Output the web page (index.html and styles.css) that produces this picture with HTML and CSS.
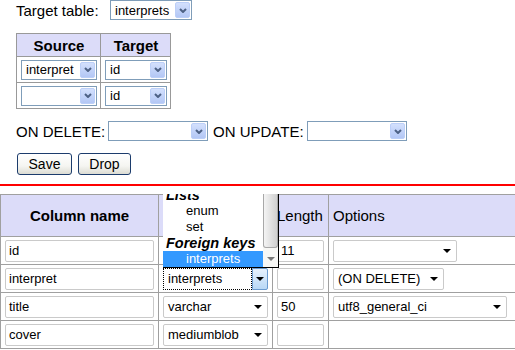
FILE: index.html
```html
<!DOCTYPE html>
<html lang="en">
    <head>
        <title>Foreign key</title>
        <meta charset="utf-8" />
        <link rel="stylesheet" href="styles.css">
    </head>
    <body>
        <div class="fk">
            <div class="fk-row">
                <span class="fk-label target-label">Target table:</span>
                <div class="xp-select w82"><span class="xp-value">interprets</span><span class="xp-btn"><svg width="8" height="5" viewBox="0 0 8 5"><path d="M1 1l3 3 3-3" fill="none" stroke="#4d6185" stroke-width="2"/></svg></span></div>
            </div>

            <table class="fk-table">
                <tr><th>Source</th><th>Target</th></tr>
                <tr>
                    <td><div class="xp-select w76"><span class="xp-value">interpret</span><span class="xp-btn"><svg width="8" height="5" viewBox="0 0 8 5"><path d="M1 1l3 3 3-3" fill="none" stroke="#4d6185" stroke-width="2"/></svg></span></div></td>
                    <td><div class="xp-select w62"><span class="xp-value">id</span><span class="xp-btn"><svg width="8" height="5" viewBox="0 0 8 5"><path d="M1 1l3 3 3-3" fill="none" stroke="#4d6185" stroke-width="2"/></svg></span></div></td>
                </tr>
                <tr>
                    <td><div class="xp-select w76"><span class="xp-value"></span><span class="xp-btn"><svg width="8" height="5" viewBox="0 0 8 5"><path d="M1 1l3 3 3-3" fill="none" stroke="#4d6185" stroke-width="2"/></svg></span></div></td>
                    <td><div class="xp-select w62"><span class="xp-value">id</span><span class="xp-btn"><svg width="8" height="5" viewBox="0 0 8 5"><path d="M1 1l3 3 3-3" fill="none" stroke="#4d6185" stroke-width="2"/></svg></span></div></td>
                </tr>
            </table>

            <div class="fk-row actions">
                <span class="fk-label delete-label">ON DELETE:</span>
                <div class="xp-select w100"><span class="xp-value"></span><span class="xp-btn"><svg width="8" height="5" viewBox="0 0 8 5"><path d="M1 1l3 3 3-3" fill="none" stroke="#4d6185" stroke-width="2"/></svg></span></div>
                <span class="fk-label update-label">ON UPDATE:</span>
                <div class="xp-select w100"><span class="xp-value"></span><span class="xp-btn"><svg width="8" height="5" viewBox="0 0 8 5"><path d="M1 1l3 3 3-3" fill="none" stroke="#4d6185" stroke-width="2"/></svg></span></div>
            </div>

            <div class="buttons">
                <button type="button" class="xp-button save">Save</button>
                <button type="button" class="xp-button drop">Drop</button>
            </div>
        </div>

        <hr class="divider">

        <table class="columns">
            <colgroup>
                <col class="c-name"><col class="c-type"><col class="c-length"><col class="c-options">
            </colgroup>
            <tr class="head">
                <th class="center">Column name</th>
                <th class="center"></th>
                <th>Length</th>
                <th>Options</th>
            </tr>
            <tr>
                <td><div class="txt w149">id</div></td>
                <td><div class="sel w105"><span class="sel-value"></span><i class="tri"></i></div></td>
                <td><div class="txt w47">11</div></td>
                <td><div class="sel w124"><span class="sel-value"></span><i class="tri"></i></div></td>
            </tr>
            <tr>
                <td><div class="txt w149">interpret</div></td>
                <td>
                    <div class="combo">
                        <div class="dropdown">
                            <div class="dropdown-items">
                                <div class="opt-group">Lists</div>
                                <div class="opt">enum</div>
                                <div class="opt">set</div>
                                <div class="opt-group">Foreign keys</div>
                                <div class="opt opt-on">interprets</div>
                            </div>
                            <div class="scrollbar">
                                <div class="thumb"></div>
                                <div class="scroll-down"><i class="tri tri-grey"></i></div>
                            </div>
                        </div>
                        <div class="sel sel-focus w105"><span class="sel-value">interprets</span><span class="sel-btn"><i class="tri"></i></span></div>
                    </div>
                </td>
                <td><div class="txt w47"></div></td>
                <td><div class="sel w111"><span class="sel-value">(ON DELETE)</span><i class="tri"></i></div></td>
            </tr>
            <tr>
                <td><div class="txt w149">title</div></td>
                <td><div class="sel w105"><span class="sel-value">varchar</span><i class="tri"></i></div></td>
                <td><div class="txt w47">50</div></td>
                <td><div class="sel w174"><span class="sel-value">utf8_general_ci</span><i class="tri"></i></div></td>
            </tr>
            <tr>
                <td><div class="txt w149">cover</div></td>
                <td><div class="sel w105"><span class="sel-value">mediumblob</span><i class="tri"></i></div></td>
                <td><div class="txt w47"></div></td>
                <td></td>
            </tr>
        </table>
    </body>
</html>
```

FILE: styles.css
```css
body {
    margin: 0;
    background-color: white;
    color: black;
    font-family: "Liberation Sans", Arial, sans-serif;
    font-size: 15px;
}

/* foreign key form */
.fk { padding-left: 16px; }
.fk-row { display: flex; align-items: center; height: 20px; }
.fk-label { white-space: nowrap; }
.target-label { width: 94px; }
.delete-label { width: 92px; }
.update-label { width: 94px; margin-left: 5px; }
.actions { margin-top: 12px; }

.xp-select {
    display: flex;
    align-items: center;
    box-sizing: border-box;
    height: 20px;
    border: 1px solid #7f9db9;
    background-color: white;
    font-size: 13px;
}
.xp-value { flex: 1; padding-left: 4px; white-space: nowrap; overflow: hidden; }
.xp-btn {
    display: flex;
    align-items: center;
    justify-content: center;
    box-sizing: border-box;
    width: 15px;
    height: 16px;
    margin-right: 1px;
    border: 1px solid #bccff8;
    border-radius: 2px;
    background: linear-gradient(#d3e0fd, #b3c7f5);
}
.w62 { width: 62px; }
.w76 { width: 76px; }
.w82 { width: 82px; }
.w100 { width: 100px; }

.fk-table { border-collapse: collapse; margin-top: 13px; }
.fk-table th, .fk-table td { border: 1px solid #999; padding: 0 3px 0 4px; }
.fk-table th { height: 22px; background-color: #dcdcf9; }
.fk-table td { height: 25px; }

.buttons { display: flex; gap: 6px; margin-top: 12px; padding-left: 1px; }
.xp-button {
    box-sizing: border-box;
    height: 22px;
    padding: 0;
    border: 1px solid #1c3c6c;
    border-radius: 3px;
    background: linear-gradient(#ffffff, #f5f5f1 60%, #dcdcd3);
    font-family: "Liberation Sans", Arial, sans-serif;
    font-size: 14px;
    color: black;
}
.save { width: 55px; }
.drop { width: 53px; }

.divider { border: 0; height: 2px; margin: 9px 0 8px; background-color: #ff0000; }

/* columns table */
.columns { border-collapse: collapse; table-layout: fixed; width: 515px; }
.c-name { width: 158px; }
.c-type { width: 114px; }
.c-length { width: 56px; }
.c-options { width: 187px; }
.columns th, .columns td { border: 1px solid #a0a0a0; padding: 0 4px; text-align: left; }
.columns th { height: 41px; background-color: #dcdcf9; font-weight: normal; }
.columns th.center { text-align: center; font-weight: bold; }
.columns td { height: 27px; }

.txt, .sel {
    display: flex;
    align-items: center;
    box-sizing: border-box;
    height: 22px;
    border: 1px solid #cacaca;
    border-radius: 2px;
    background-color: white;
    font-size: 13px;
    white-space: nowrap;
}
.txt { padding-left: 3px; }
.sel-value { flex: 1; padding-left: 4px; overflow: hidden; }
.w47 { width: 47px; }
.w105 { width: 105px; }
.w111 { width: 111px; }
.w124 { width: 124px; }
.w149 { width: 149px; }
.w174 { width: 174px; }

.tri {
    width: 0;
    height: 0;
    margin-right: 5px;
    border-left: 4px solid transparent;
    border-right: 4px solid transparent;
    border-top: 4px solid black;
}
.tri-grey { margin: 0; border-top-color: #777; }

.sel-focus { border: 0; border-radius: 0; }
.sel-focus .sel-value {
    box-sizing: border-box;
    height: 22px;
    line-height: 20px;
    border: 1px dotted black;
}
.sel-btn {
    display: flex;
    align-items: center;
    justify-content: center;
    box-sizing: border-box;
    width: 16px;
    height: 22px;
    border: 1px solid #6a9bd0;
    border-radius: 0 2px 2px 0;
    background: linear-gradient(#e6f1fd, #b8d8f6);
}
.sel-btn .tri { margin: 0; }

/* open list of the focused select */
.combo { position: relative; }
.dropdown {
    position: absolute;
    left: 0;
    bottom: 100%;
    display: flex;
    width: 115px;
    height: 73px;
    border-right: 1px solid black;
    border-bottom: 1px solid black;
    background-color: white;
    overflow: hidden;
}
.dropdown-items {
    flex: 1;
    display: flex;
    flex-direction: column;
    justify-content: flex-end;
    font-size: 13px;
}
.opt-group, .opt { height: 16px; line-height: 16px; white-space: nowrap; flex-shrink: 0; }
.opt-group { padding-left: 3px; font-weight: bold; font-style: italic; font-size: 14.5px; }
.opt { padding-left: 23px; }
.opt-on { background-color: #3399ff; color: white; }

.scrollbar { display: flex; flex-direction: column; width: 15px; background-color: #f7f7f5; }
.thumb {
    height: 54px;
    box-sizing: border-box;
    border: 1px solid #a8a8a8;
    border-top: 0;
    border-radius: 0 0 3px 3px;
    background: linear-gradient(90deg, #f4f4f4, #d0d0d0);
}
.scroll-down { display: flex; align-items: center; justify-content: center; margin-top: auto; height: 16px; }
```
